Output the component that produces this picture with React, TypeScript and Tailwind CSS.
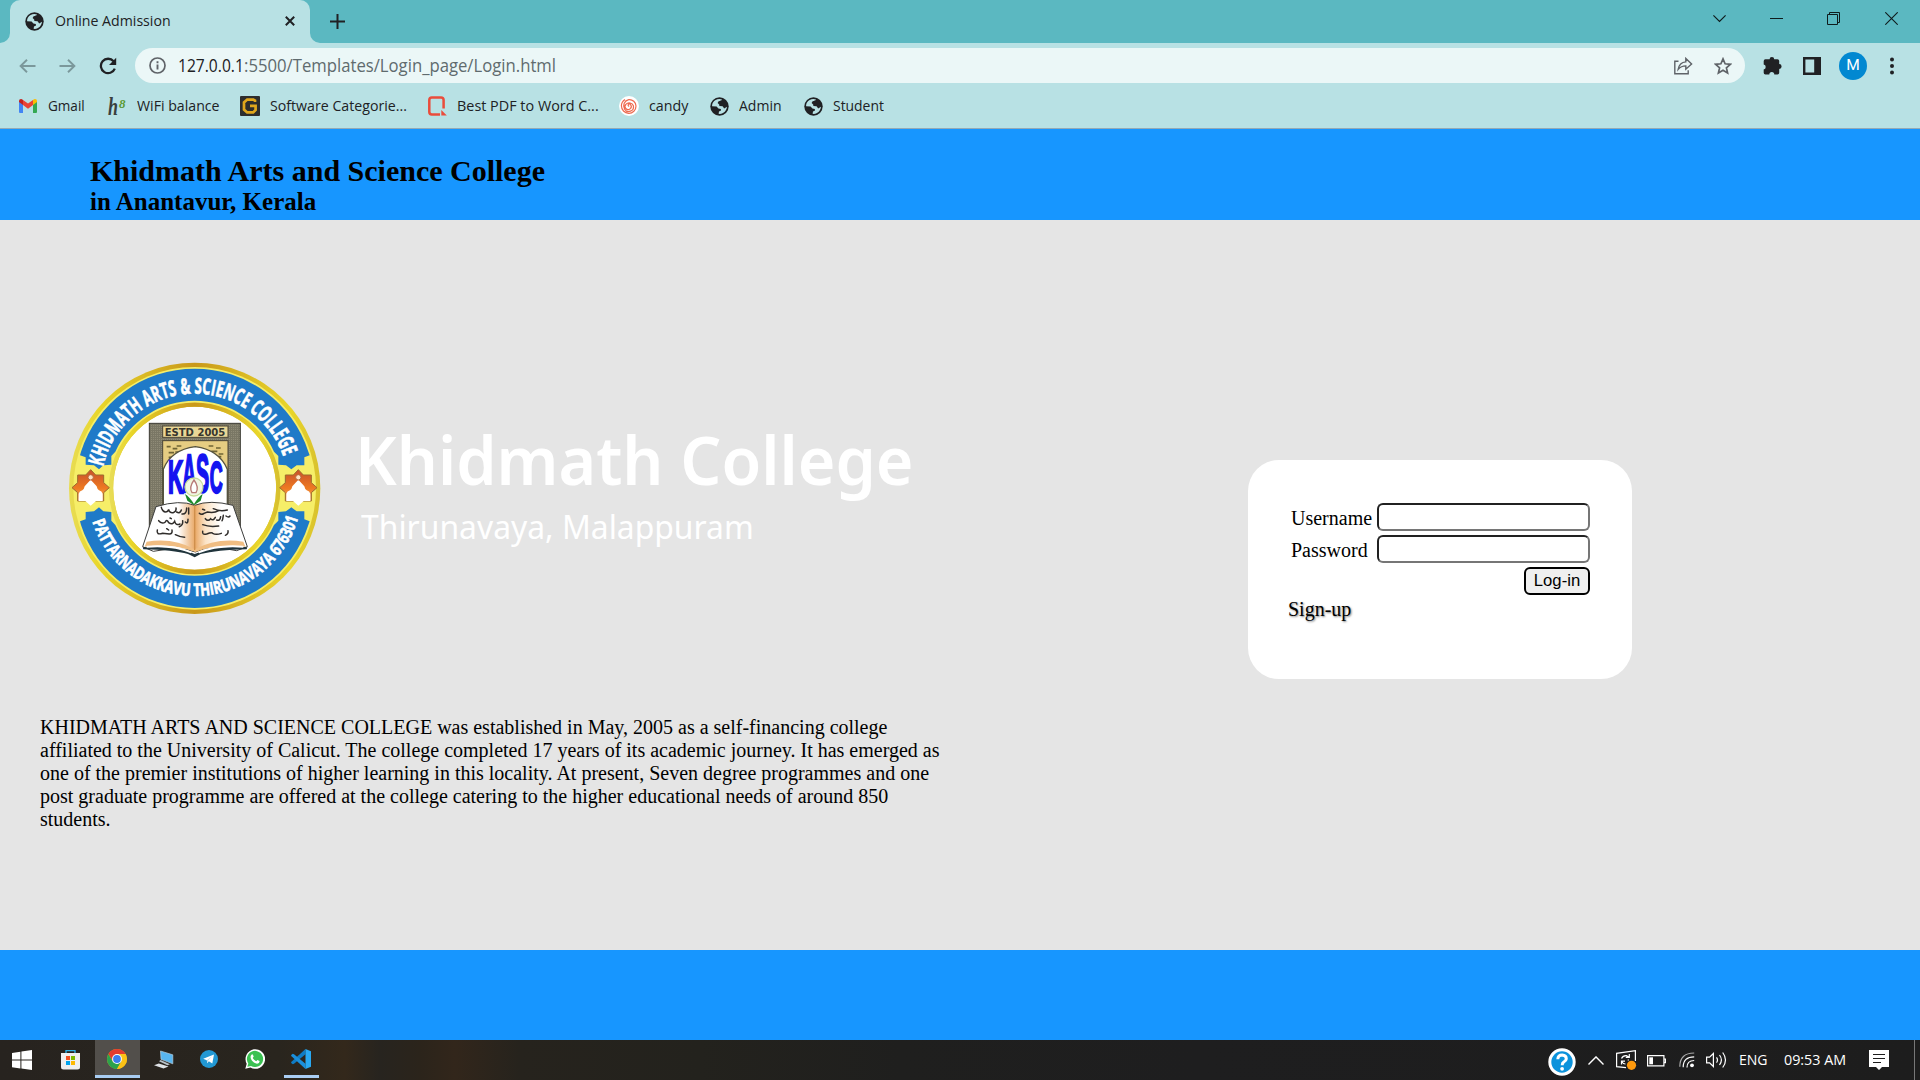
import { useLayoutEffect, useRef, useState } from "react";

const UI = "font-['Open_Sans',sans-serif]";
const SERIF = "font-['Liberation_Serif',serif]";

/** One line of text condensed or stretched to the width of its box. */
function Fit({ children, className = "" }: { children: string; className?: string }) {
  const box = useRef<HTMLSpanElement>(null);
  const text = useRef<HTMLSpanElement>(null);
  const [scale, setScale] = useState(1);
  useLayoutEffect(() => {
    const measure = () => {
      if (box.current && text.current && text.current.offsetWidth) {
        setScale(box.current.clientWidth / text.current.offsetWidth);
      }
    };
    measure();
    document.fonts?.ready.then(measure);
  }, []);
  return (
    <span ref={box} className={`block shrink-0 whitespace-nowrap ${className}`}>
      <span ref={text} className="inline-block origin-left" style={{ transform: `scaleX(${scale})` }}>
        {children}
      </span>
    </span>
  );
}

function Globe() {
  return (
    <svg className="size-[19px] shrink-0" viewBox="0 0 19 19">
      <circle cx="9.5" cy="9.5" r="9.2" fill="#202124" />
      <path
        d="M3 5.6C4.4 3.3 6.6 2.1 9.4 2.1L12 2.6C11.6 3.6 10.2 4 8.6 4.2L7.6 6 9.2 7.4 9.4 9 12.6 9.2 14.2 11.4 17 9.8C16.8 13.4 13.8 16.8 9.8 17L8.6 16.7 9 14.4 11 13.4 10.8 12 8.4 11.4 6.6 9.6 2.1 9.2C2 8 2.4 6.6 3 5.6Z"
        fill="#b8e1e4"
      />
      <path d="M2.6 10.4 6 11l1.6 3-.4 2.2C4.6 15.4 3 13.2 2.6 10.4Z" fill="#202124" />
    </svg>
  );
}

function TabStrip() {
  return (
    <div className="flex h-[43px] items-stretch bg-[#5bb8c1]">
      <svg className="w-[10px] shrink-0" viewBox="0 0 10 43">
        <path d="M0 43A10 10 0 0 0 10 33V43Z" fill="#b8e1e4" />
      </svg>
      <div className="flex w-[300px] items-center rounded-t-[10px] bg-[#b8e1e4] pb-[1px] pl-[15px]">
        <Globe />
        <Fit className="ml-[11px] w-[116px] pb-[2px] text-[15px] leading-[22px] text-[#202124]">Online Admission</Fit>
        <svg className="ml-[114px] size-[10px]" viewBox="0 0 10 10" stroke="#202124" strokeWidth="2">
          <path d="M.8.8l8.4 8.4M9.2.8L.8 9.2" />
        </svg>
      </div>
      <svg className="w-[10px] shrink-0" viewBox="0 0 10 43">
        <path d="M10 43A10 10 0 0 1 0 33V43Z" fill="#b8e1e4" />
      </svg>
      <svg className="mt-[14px] ml-[10px] size-[15px]" viewBox="0 0 15 15" stroke="#202124" strokeWidth="2">
        <path d="M0 7.5h15M7.5 0v15" />
      </svg>
      <div className="mt-3 mr-[22px] ml-auto flex items-start text-[#0f1c1d]">
        <svg className="mr-[44px] h-[13px] w-[13px]" viewBox="0 0 13 13" fill="none" stroke="currentColor" strokeWidth="1.2">
          <path d="M.4 3.3l6.1 6.2 6.1-6.2" />
        </svg>
        <svg className="mr-[44px] h-[13px] w-[13px]" viewBox="0 0 13 13" stroke="currentColor">
          <path d="M0 6.5h13" />
        </svg>
        <svg className="mr-[45px] h-[13px] w-[13px]" viewBox="0 0 13 13" fill="none" stroke="currentColor">
          <path d="M.5 2.5h10v10H.5zM2.5 2.5v-2h10v10h-2" />
        </svg>
        <svg className="h-[13px] w-[13px]" viewBox="0 0 13 13" stroke="currentColor" strokeWidth="1.1">
          <path d="M.3.3l12.4 12.4M12.7.3L.3 12.7" />
        </svg>
      </div>
    </div>
  );
}

function Toolbar() {
  return (
    <div className="flex h-[45px] items-center bg-[#b8e1e4]">
      <svg className="ml-[19px] h-[14px] w-[17px]" viewBox="0 0 17 14" fill="none" stroke="#7b989b" strokeWidth="1.9">
        <path d="M16.5 7H1.6M8 .7L1.6 7 8 13.3" />
      </svg>
      <svg className="ml-[23px] h-[14px] w-[17px]" viewBox="0 0 17 14" fill="none" stroke="#7b989b" strokeWidth="1.9">
        <path d="M.5 7h14.9M9 .7L15.4 7 9 13.3" />
      </svg>
      <svg className="ml-[23px] h-[18px] w-[18px]" viewBox="0 0 18 18">
        <path d="M14.6 4.3A7.2 7.2 0 1 0 15.8 11.6" fill="none" stroke="#202124" strokeWidth="2.3" />
        <path d="M17.2.8V8H10Z" fill="#202124" />
      </svg>
      <div className="ml-[18px] flex h-[35px] w-[1610px] items-center rounded-full bg-[#ebf7f7] pl-[14px]">
        <svg className="size-[17px]" viewBox="0 0 17 17" fill="none" stroke="#5f6368" strokeWidth="1.7">
          <circle cx="8.5" cy="8.5" r="7.5" />
          <path d="M8.5 7.5v5M8.5 4.3v1.9" strokeWidth="1.9" />
        </svg>
        <Fit className="ml-[12px] w-[66px] pb-[1px] text-[17.5px] leading-[26px] text-[#202124]">127.0.0.1</Fit>
        <Fit className="w-[312px] pb-[1px] text-[17.5px] leading-[26px] text-[#5f6b6e]">:5500/Templates/Login_page/Login.html</Fit>
        <svg className="ml-auto h-[18px] w-[19px]" viewBox="0 0 19 18" fill="none" stroke="#5f6368" strokeWidth="1.4">
          <path d="M4.5 4.2H.8v12.6h13.4v-3.6" />
          <path d="M4.2 12.4C5 7.6 7.6 5.2 11.8 4.9V1.4l5.8 5.5-5.8 5.3V8.9C8.4 8.9 6.2 10 4.2 12.4Z" />
        </svg>
        <svg className="mr-[13px] ml-[21px] size-[18px]" viewBox="0 0 18 18" fill="none" stroke="#5f6368" strokeWidth="1.7">
          <path d="M9 1.9l2.1 4.9 5.3.5-4 3.5 1.2 5.2L9 13.2 4.4 16l1.2-5.2-4-3.5 5.3-.5Z" />
        </svg>
      </div>
      <svg className="ml-[18px] size-[19px]" viewBox="0 0 19 19" fill="#202124">
        <path d="M6.6 3.2a2.3 2.3 0 0 1 4.6 0h3.3a1.7 1.7 0 0 1 1.7 1.7v3.2a2.3 2.3 0 0 1 0 4.8v3.9a1.7 1.7 0 0 1-1.7 1.7h-3.200a2.500 2.500 0 0 0-5 0H2.400A1.700 1.700 0 0 1 .7 16.800v-3.300a2.500 2.500 0 0 0 0-4.900V4.900a1.700 1.700 0 0 1 1.700-1.700Z" />
      </svg>
      <svg className="ml-[21px] h-[18px] w-[18px]" viewBox="0 0 18 18">
        <path d="M0 0h18v18H0zM2.4 2.4v13.2h8.8V2.4z" fill="#202124" fillRule="evenodd" />
      </svg>
      <div className="ml-[18px] flex size-7 items-center justify-center rounded-full bg-[#0288d1] font-[Roboto,sans-serif] text-[15.5px] text-white">
        M
      </div>
      <svg className="ml-[23px] h-[18px] w-1" viewBox="0 0 4 18" fill="#202124">
        <circle cx="2" cy="2.4" r="2" />
        <circle cx="2" cy="9" r="2" />
        <circle cx="2" cy="15.4" r="2" />
      </svg>
    </div>
  );
}

function Bookmarks() {
  const label = "pb-[2px] text-[15px] leading-[22px] text-[#202124]";
  return (
    <div className="flex h-[41px] items-center border-b border-[#93a9b5] bg-[#b8e1e4] pb-[4px] pl-[19px]">
      <svg className="h-[14px] w-[18px]" viewBox="0 0 18 14">
        <path d="M0 2v11q0 1 1 1h3V5Z" fill="#4285f4" />
        <path d="M18 2v11q0 1-1 1h-3V5Z" fill="#34a853" />
        <path d="M14 .9V6l4-3V2q0-2-2-2-1 0-2 .9Z" fill="#fbbc04" />
        <path d="M4 .9V6L0 3V2q0-2 2-2 1 0 2 .9Z" fill="#c5221f" />
        <path d="M4 .9l5 3.7L14 .9V6L9 9.8 4 6Z" fill="#ea4335" />
      </svg>
      <Fit className={`ml-[11px] w-[37px] ${label}`}>Gmail</Fit>
      <svg className="ml-[23px] h-[20px] w-[19px] overflow-visible" viewBox="0 0 19 20">
        <text x="0" y="19" textLength="10" lengthAdjust="spacingAndGlyphs" className={`${SERIF} text-[25px] font-bold italic`} fill="#3a3f3f">
          h
        </text>
        <text x="11" y="12" className={`${SERIF} text-[13px] font-bold italic`} fill="#5b9a34">
          8
        </text>
      </svg>
      <Fit className={`ml-[10px] w-[83px] ${label}`}>WiFi balance</Fit>
      <svg className="ml-[20px] size-[20px]" viewBox="0 0 20 20">
        <rect width="20" height="20" rx="1" fill="#2d2d2d" />
        <path d="M15 6.1V4.6L13.4 3.6H7.2L4 6.4v7.2l3.2 2.8h6L15.6 14V9.800H10" fill="none" stroke="#e0a61c" strokeWidth="2.7" />
      </svg>
      <Fit className={`ml-[10px] w-[137px] ${label}`}>Software Categorie...</Fit>
      <svg className="ml-[21px] h-[20px] w-[19px]" viewBox="0 0 19 20">
        <path d="M12 18.4H3.8Q1.3 18.4 1.3 16V4Q1.3 1.4 3.8 1.4H13Q15.6 1.4 15.6 4v8.5" fill="none" stroke="#ea4c3b" strokeWidth="2.5" />
        <path d="M13.3 14v5.600h5.500Z" fill="#ea4c3b" />
      </svg>
      <Fit className={`ml-[10px] w-[142px] ${label}`}>Best PDF to Word C...</Fit>
      <svg className="ml-[20px] size-[20px]" viewBox="0 0 20 20" fill="none">
        <circle cx="10" cy="10" r="10" fill="#fff" />
        <path
          d="M10.200 10.400A1.300 1.300 0 1 1 11.600 8.600 3.100 3.100 0 1 1 7 8.200 4.500 4.500 0 0 1 14.400 9.800 4.800 4.800 0 0 1 5.600 13.200 6.400 6.400 0 0 1 9.800 3.600 6.600 6.600 0 0 1 17 10 7.200 7.200 0 0 1 9.600 17.300 7.600 7.600 0 0 1 2.400 9.800 7.800 7.800 0 0 1 6 3.400"
          stroke="#ee6a50"
          strokeWidth="1.2"
        />
      </svg>
      <Fit className={`ml-[10px] w-[39px] ${label}`}>candy</Fit>
      <div className="ml-[22px] flex">
        <Globe />
      </div>
      <Fit className={`ml-[10px] w-[43px] ${label}`}>Admin</Fit>
      <div className="ml-[22px] flex">
        <Globe />
      </div>
      <Fit className={`ml-[10px] w-[51px] ${label}`}>Student</Fit>
    </div>
  );
}

const BAND =
  "M93 305A358 358 0 0 1 775 305L779 316 763 322V346H740L724 358 708 346 685 344V318L672 305A262 262 0 0 0 196 305L184 318V344L160 346 147 358 132 346 107 344V322L90 316Z";

function StarBadge({ x }: { x: number }) {
  return (
    <g transform={`translate(${x} 413)`}>
      <path
        d="M0-54L15-38H39V-15L56 0 39 15V40H-39V15L-56 0-39-15V-38H-15Z"
        fill="url(#orange)"
        stroke="#9b6a2c"
        strokeWidth="3"
      />
      <path d="M0 54L-16 40H-36V18Q-34 10-25 8-20 6-18-4L0-24 18-4Q20 6 25 8 34 10 36 18V40H16Z" fill="#fff" />
      <circle cx="0" cy="-31" r="8" fill="#ffe3c4" stroke="#b5653a" strokeWidth="3" />
    </g>
  );
}

function Seal() {
  return (
    <svg className="h-[280px] w-[290px] shrink-0" viewBox="0 0 870 840">
      <defs>
        <linearGradient id="gold" x1="0" x2="1" y1="0" y2="0">
          <stop offset="0" stopColor="#e8dc55" />
          <stop offset=".12" stopColor="#e9d62a" />
          <stop offset=".5" stopColor="#c9981a" />
          <stop offset=".88" stopColor="#e9d62a" />
          <stop offset="1" stopColor="#d8c02e" />
        </linearGradient>
        <linearGradient id="orange" x1="0" x2="0" y1="0" y2="1">
          <stop offset="0" stopColor="#c8502a" />
          <stop offset=".6" stopColor="#ee7a22" />
          <stop offset="1" stopColor="#f3b070" />
        </linearGradient>
        <linearGradient id="page" x1="0" x2="1" y1="0" y2="0">
          <stop offset="0" stopColor="#fff" />
          <stop offset=".34" stopColor="#fff" />
          <stop offset=".5" stopColor="#e9a866" />
          <stop offset=".6" stopColor="#fbe3c6" />
          <stop offset=".75" stopColor="#fff" />
        </linearGradient>
        <pattern id="mesh" width="6" height="6" patternUnits="userSpaceOnUse">
          <rect width="6" height="6" fill="#8f8b77" />
          <path d="M0 1h6M1 3v3" stroke="#5f5c4e" strokeWidth="1.6" />
        </pattern>
        <path id="arcTop" d="M155 372A282 282 0 0 1 713 372" />
        <path id="arcBottom" d="M111 415A323 323 0 0 0 757 415" />
      </defs>
      <circle cx="434" cy="415" r="377" fill="url(#gold)" />
      <circle cx="434" cy="415" r="364" fill="#f6ee68" />
      <circle cx="434" cy="415" r="250" fill="#fff" stroke="#e3cf3c" strokeWidth="11" />
      <path d={BAND} fill="#1f7ac8" />
      <path d={BAND} fill="#1f7ac8" transform="matrix(1 0 0 -1 0 830)" />
      <circle cx="434" cy="415" r="251" fill="none" stroke="url(#gold)" strokeWidth="13" />
      <StarBadge x={122} />
      <StarBadge x={745} />
      <g className="font-['Open_Sans',sans-serif] font-bold" fill="#fff" stroke="#fff" strokeWidth="2">
        <text className="text-[66px]" textLength="728" lengthAdjust="spacingAndGlyphs">
          <textPath href="#arcTop" startOffset="22" textLength="728" lengthAdjust="spacingAndGlyphs">
            KHIDMATH ARTS &amp; SCIENCE COLLEGE
          </textPath>
        </text>
        <text className="text-[52px]" textLength="824" lengthAdjust="spacingAndGlyphs">
          <textPath href="#arcBottom" startOffset="101" textLength="824" lengthAdjust="spacingAndGlyphs">
            PATTARNADAKKAVU THIRUNAVAYA 676301
          </textPath>
        </text>
      </g>
      <rect x="298" y="220" width="273" height="370" fill="url(#mesh)" stroke="#3b3a33" strokeWidth="3" />
      <rect x="338" y="228" width="196" height="34" fill="#e9d796" stroke="#4a4536" strokeWidth="3" />
      <text x="344" y="257" textLength="182" lengthAdjust="spacingAndGlyphs" className="font-['DejaVu_Sans',sans-serif] text-[30px] font-bold" fill="#37352c">
        ESTD 2005
      </text>
      <rect x="338" y="272" width="196" height="200" fill="#e6cd82" stroke="#4a4536" strokeWidth="3" />
      <path
        d="M350 290h12m6 6h14m-26 12h16m8-20h14m-38 34h10m10-16h12M476 288h14m8 6h14m-28 10h18m4 8h14m-16 8h10"
        stroke="#6f6434"
        strokeWidth="5"
      />
      <path d="M340 480V358Q362 300 436 290 508 300 532 358V480Z" fill="#fff" stroke="#55533f" strokeWidth="4" />
      <g fill="#1414f0" stroke="#1414f0" strokeWidth="7" className="font-['Liberation_Sans',sans-serif] font-bold">
        <text transform="translate(354 428) scale(.46 1)" className="text-[138px]">K</text>
        <text transform="translate(397 426) scale(.36 1)" className="text-[160px]">A</text>
        <text transform="translate(438 426) scale(.37 1)" className="text-[160px]">S</text>
        <text transform="translate(479 428) scale(.4 1)" className="text-[134px]">C</text>
      </g>
      <path d="M405 432Q418 440 432 462 446 440 458 432L452 452 432 466 412 452Z" fill="#1f8a2c" />
      <circle cx="432" cy="411" r="27" fill="#f1f6e2" stroke="#c9dc9a" strokeWidth="4" />
      <path d="M432 390Q448 412 438 428H426Q416 412 432 390Z" fill="#fff" stroke="#b77a76" strokeWidth="4" />
      <path d="M278 590L318 470Q390 448 434 466 480 448 549 466L592 590 560 602Q480 584 436 606 390 588 310 604Z" fill="url(#page)" stroke="#3c3d3c" strokeWidth="3" />
      <path d="M290 575Q370 562 434 598 500 562 580 575L586 590Q500 580 436 606 370 578 284 590Z" fill="#f0bd82" />
      <path d="M278 592Q370 584 434 612 500 584 592 592L590 598Q500 600 452 612L434 622 414 612Q370 600 280 598Z" fill="#20343c" />
      <path d="M290 590Q370 584 424 607M580 590Q500 584 446 607" fill="none" stroke="#fff" strokeWidth="6" />
      <path d="M434 466V600" stroke="#cf8f4c" strokeWidth="4" />
      <g fill="none" stroke="#2f2c2a" strokeWidth="4.5" strokeLinecap="round">
        <path d="M334 472q4 14 12 14t10-8q2 12 14 10 10-4 8-14m2 12q10 6 14-6m2 12q14 2 14-18m6 0v18" />
        <path d="M326 512q10 12 20 4 4-10 10 2 12 8 18-4 4 14 16 8m8-10q2 14-10 18m18-14q8 8 8-8M360 504l4 2" />
        <path d="M322 540q-4 16 16 10l20 2q10 0 8-12m10 14q16 8 28 8M350 536l6 4" />
        <path d="M448 490q6 6 14 0l10-4q20 4 34-4m-16-6q20 10 42 4M458 478l6 2" />
        <path d="M458 524q20 8 48 4m-40-22q8 10 16 0 8 8 14-4m4 8q10 4 12-10m8-4q-2 14-4 16m12-14q8 6 12 0" />
        <path d="M458 544q-2 12 12 8 16-6 18-2 10 6 26 0m20-8q2 10-8 14" />
      </g>
    </svg>
  );
}

function LoginCard() {
  const field =
    "h-7 w-[213px] rounded-[6px] border-2 border-t-[#212121] border-r-[#767676] border-b-[#767676] border-l-[#212121] bg-white outline-none";
  return (
    <form className="flex h-[219px] w-[384px] flex-col rounded-[31px] bg-white pt-[43px] pl-[40px] text-[20px] leading-[23px] text-black">
      <div className="ml-[3px] flex w-[299px] flex-col gap-1">
        <label className="flex h-7 items-center justify-between">
          <span className="pt-[2px]">Username</span>
          <input className={field} />
        </label>
        <label className="flex h-7 items-center justify-between">
          <span className="pt-[2px]">Password</span>
          <input className={field} type="password" />
        </label>
        <button
          type="button"
          className="flex h-7 w-[66px] items-center justify-center self-end rounded-[6px] border-2 border-black bg-[#efefef] pb-[1px] font-['Liberation_Sans',sans-serif] text-[16.67px] leading-5"
        >
          Log-in
        </button>
      </div>
      <a className="mt-[3px] w-fit [text-shadow:1px_1px_2px_#00000080]">Sign-up</a>
    </form>
  );
}

function Page() {
  return (
    <div className={`${SERIF} flex flex-col bg-[#e5e5e5] text-black`}>
      <header className="h-[91px] bg-[#1796ff] pt-[25px] pl-[90px] font-bold">
        <h1>
          <Fit className="w-[455px] text-[30px] leading-[34px]">Khidmath Arts and Science College</Fit>
        </h1>
        <h2>
          <Fit className="w-[226px] text-[25px] leading-[28px]">in Anantavur, Kerala</Fit>
        </h2>
      </header>
      <main className="grid h-[730px] grid-cols-[960px_1fr]">
        <section className="pt-[130px]">
          <div className="flex pl-[50px]">
            <Seal />
            <div className="ml-[15px] flex flex-col pt-[64px] font-['Noto_Sans',sans-serif] text-white">
              <Fit className="w-[559px] text-[66px] leading-[90px] font-semibold">Khidmath College</Fit>
              <Fit className="mt-[1px] ml-[6px] w-[393px] text-[32px] leading-[44px]">Thirunavaya, Malappuram</Fit>
            </div>
          </div>
          <p className="mt-[86px] pl-10 text-[20px] leading-[23px] whitespace-nowrap">
            KHIDMATH ARTS AND SCIENCE COLLEGE was established in May, 2005 as a self-financing college
            <br />
            affiliated to the University of Calicut. The college completed 17 years of its academic journey. It has emerged as
            <br />
            one of the premier institutions of higher learning in this locality. At present, Seven degree programmes and one
            <br />
            post graduate programme are offered at the college catering to the higher educational needs of around 850
            <br />
            students.
          </p>
        </section>
        <section className="flex justify-center pt-[240px]">
          <LoginCard />
        </section>
      </main>
      <footer className="h-[90px] bg-[#1796ff]" />
    </div>
  );
}

function Taskbar() {
  return (
    <div className="flex h-10 items-stretch bg-[linear-gradient(90deg,#27231f_0px,#29251e_280px,#33281b_345px,#27241f_380px,#2b241b_420px,#32261b_455px,#26231d_520px,#23221d_700px,#1f1f1e_900px,#1e1e1f_1200px,#1d1d1d_1920px)] text-white">
      <svg className="mt-[10px] ml-3 size-5" viewBox="0 0 20 20" fill="#fff">
        <path d="M0 2.9L8.4 1.7V9.5H0ZM9.4 1.5L20 0V9.5H9.4ZM0 10.5H8.4V18.4L0 17.2ZM9.4 10.5H20V20L9.4 18.5Z" />
      </svg>
      <svg className="mt-[10px] ml-[29px] h-5 w-[19px]" viewBox="0 0 19 20">
        <path d="M5 4V.7h9V4" fill="none" stroke="#2fb4ea" strokeWidth="1.3" />
        <path d="M0 3h19v14q0 2.5-2.5 2.5h-14Q0 19.5 0 17Z" fill="#efefef" />
        <path d="M5 6h4v4H5z" fill="#f25022" />
        <path d="M10 6h4v4h-4z" fill="#7fba00" />
        <path d="M5 11h4v4H5z" fill="#00a4ef" />
        <path d="M10 11h4v4h-4z" fill="#ffb900" />
      </svg>
      <div className="mb-[2px] ml-[15px] flex w-[45px] border-b-3 border-[#a9cdf3] bg-[#524f4b] pl-3">
        <svg className="mt-[9px] size-5" viewBox="-10 -10 20 20">
          <circle r="10" fill="#fbc116" />
          <path d="M-8.660-5A10 10 0 0 1 8.660-5L0-4.800-4.100 2.400Z" fill="#e33b2e" />
          <path d="M-8.660-5A10 10 0 0 0 0 10L4.300 2.400-4.200 2.400Z" fill="#2ba24c" />
          <path d="M8.660-5A10 10 0 0 1 0 10L4.500 2.200 0-4.900Z" fill="#fbc116" />
          <circle r="4.9" fill="#fff" />
          <circle r="3.9" fill="#3b7ded" />
        </svg>
      </div>
      <svg className="mt-[10px] ml-[14px] h-[19px] w-5" viewBox="0 0 20 19">
        <path d="M6.500 1L18.800 4.800V13.800L7 9.300Z" fill="#58b5ef" stroke="#b4cad8" strokeWidth=".7" />
        <path d="M6.500 10L16 14.200 13.500 15.300 5 11.200Z" fill="#b9c2c8" />
        <path d="M0 15.200L4.800 13.400 14.500 16.500 9.500 18.600Z" fill="#dfe3e6" />
      </svg>
      <svg className="mt-[10px] ml-[26px] size-[18px]" viewBox="0 0 18 18">
        <circle cx="9" cy="9" r="9" fill="#2298d3" />
        <path d="M3.2 8.8L14 4.5 12.3 13.6 8.8 11.2 7.3 13.2 6.8 10.2Z" fill="#fff" />
        <path d="M6.8 10.2L12 6.2 8 10.8 7.3 13.2Z" fill="#b8d9ee" />
      </svg>
      <svg className="mt-[9px] ml-[27px] size-5" viewBox="0 0 20 20">
        <path d="M.3 19.8L1.7 14.7A9.8 9.8 0 1 1 5.4 18.5Z" fill="#fff" />
        <path d="M2.3 17.8L3.3 14.5A8.1 8.1 0 1 1 6 17Z" fill="#3bc152" />
        <path d="M6.7 5.4Q7.5 5 7.9 5.7L8.7 7.6 7.7 9Q8.9 11.3 11.3 12.2L12.4 11 14.6 12.1Q14.7 14.4 12.1 14.7 9.4 14.5 7 11.7 4.2 8 6.7 5.4Z" fill="#fff" />
      </svg>
      <div className="mb-[2px] ml-[19px] flex w-[35px] justify-center border-b-3 border-[#a9cdf3]">
        <svg className="mt-[9px] -ml-[1px] size-5" viewBox="0 0 20 20">
          <path d="M14.5 0V5.2L3 14.8 1.8 15.2.2 13.900V13L14.5 0Z" fill="#0f7cc4" />
          <path d="M14.5 20V14.8L3 5.2 1.8 4.8.2 6.1V7L14.5 20Z" fill="#1a8fdc" />
          <path d="M14.5 0L20 2.2V17.8L14.5 20Z" fill="#29a9f2" />
        </svg>
      </div>
      <div className="ml-auto flex items-start">
        <svg className="mt-2 size-7" viewBox="0 0 28 28">
          <circle cx="14" cy="14" r="12.2" fill="#0c93dc" stroke="#fff" strokeWidth="3" />
          <path d="M9.8 11.3Q10 7 14.2 7 18.3 7.2 18.3 10.8 18.1 12.8 15.8 14 14.2 15 14.2 17.3" fill="none" stroke="#fff" strokeWidth="3" />
          <circle cx="14.1" cy="20.8" r="1.9" fill="#fff" />
        </svg>
        <svg className="mt-4 ml-3 h-[9px] w-4" viewBox="0 0 16 9" fill="none" stroke="#fff" strokeWidth="1.4">
          <path d="M.5 8.4L8 .9 15.5 8.4" />
        </svg>
        <svg className="mt-[10px] ml-3 h-5 w-[21px]" viewBox="0 0 21 20" fill="none" stroke="#fff" strokeWidth="1.2">
          <path d="M10 17.700L.6 16.700V3.300L19.400.700V11" />
          <path d="M5.500 8.500Q7 5.400 10.300 5.600L13 7M13.300 4v3.300h-3.500M12.500 9.500l-.5 1M5.500 14.500v-3.300h3.500M5.700 11.500Q7 14 9.500 14" />
          <circle cx="15.5" cy="15.3" r="4.6" fill="#ff9a0d" stroke="none" />
        </svg>
        <svg className="mt-[15px] ml-[10px] h-3 w-[19px]" viewBox="0 0 19 12" fill="none" stroke="#fff" strokeWidth="1.2">
          <path d="M.6.6H16.900V10.900H.6ZM17 4h1.400v3.600H17" />
          <path d="M2.300 2.300H6v7H2.300Z" fill="#fff" stroke="none" />
        </svg>
        <svg className="mt-3 ml-[13px] h-4 w-4" viewBox="0 0 16 16" fill="none" stroke="#fff" strokeWidth="1.2">
          <path d="M.8 14.800Q.8 1 15.200 1" stroke="#aaa" />
          <path d="M4.200 15.300Q4.200 4.800 15.200 4.800M8 15.500Q8 8.500 15.200 8.500" />
          <circle cx="13" cy="13.3" r="1.9" fill="#fff" stroke="none" />
        </svg>
        <svg className="mt-[11px] ml-[11px] h-[18px] w-[21px]" viewBox="0 0 21 18" fill="none" stroke="#fff" strokeWidth="1.2">
          <path d="M.6 6.200H3.600L7.400 2.500V15.500L3.600 11.800H.6Z" />
          <path d="M10.500 6.300Q12.500 9 10.500 11.700M13.500 4Q17.300 9 13.500 14M16.700 1.500Q22.300 9 16.700 16.500" />
        </svg>
        <Fit className="mt-[7px] ml-[12px] w-[29px] text-[15px] leading-[25px]">ENG</Fit>
        <Fit className="mt-[7px] ml-4 w-[62px] text-[15px] leading-[25px]">09:53 AM</Fit>
        <svg className="mt-[10px] ml-[23px] h-[21px] w-5" viewBox="0 0 20 21">
          <path d="M0 0H20V17H13L10 20 7 17H0Z" fill="#fff" />
          <path d="M4 4.500H16M4 8.500H16M4 12.500H12" stroke="#1d1d1d" strokeWidth="1.1" />
        </svg>
        <div className="mr-[5px] ml-[25px] h-10 w-[1px] bg-[#777]" />
      </div>
    </div>
  );
}

export default function App() {
  return (
    <div className={`${UI} flex h-[1080px] w-[1920px] flex-col overflow-hidden`}>
      <TabStrip />
      <Toolbar />
      <Bookmarks />
      <Page />
      <Taskbar />
    </div>
  );
}
